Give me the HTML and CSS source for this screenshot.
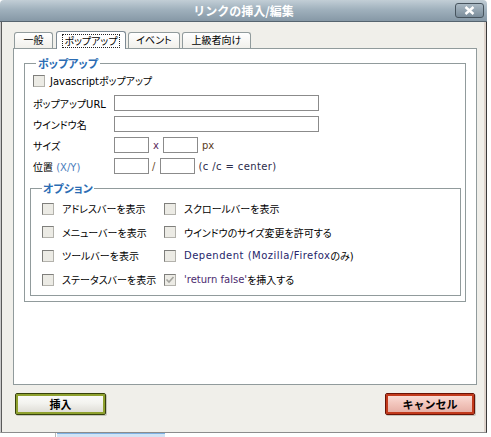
FILE: index.html
```html
<!DOCTYPE html>
<html lang="ja">
<head>
<meta charset="utf-8">
<title>リンクの挿入/編集</title>
<link rel="stylesheet" href="styles.css">
</head>
<body>
<div class="window">
  <div class="titlebar">
    <span class="spacer"></span>
    <span class="title">リンクの挿入/編集</span>
    <span class="close"><svg width="11" height="9" viewBox="0 0 11 9"><path d="M1.5 1 L9.5 8 M9.5 1 L1.5 8" stroke="#fff" stroke-width="2.4" fill="none"/></svg></span>
  </div>
  <div class="main">
    <div class="tabs">
      <div class="tab t1">一般</div>
      <div class="tab t2 active"><span class="focus">ポップアップ</span></div>
      <div class="tab t3">イベント</div>
      <div class="tab t4">上級者向け</div>
    </div>
    <div class="panel">
      <fieldset class="grp">
        <legend>ポップアップ</legend>
        <div class="jsrow"><span class="cb"></span><span>Javascriptポップアップ</span></div>
        <div class="form">
          <span class="lbl">ポップアップURL</span>
          <div class="field"><input class="inp url" type="text"></div>
          <span class="lbl">ウインドウ名</span>
          <div class="field"><input class="inp url" type="text"></div>
          <span class="lbl">サイズ</span>
          <div class="field"><input class="inp sm" type="text"><span class="times">x</span><input class="inp sm" type="text"><span class="unit">px</span></div>
          <span class="lbl">位置 <span class="xy">(X/Y)</span></span>
          <div class="field"><input class="inp sm" type="text"><span class="slash">/</span><input class="inp sm" type="text"><span class="hint">(c /c = center)</span></div>
        </div>
        <fieldset class="grp inner">
          <legend>オプション</legend>
          <div class="opts">
            <div class="opt"><span class="cb"></span>アドレスバーを表示</div>
            <div class="opt"><span class="cb"></span>スクロールバーを表示</div>
            <div class="opt"><span class="cb"></span>メニューバーを表示</div>
            <div class="opt"><span class="cb"></span>ウインドウのサイズ変更を許可する</div>
            <div class="opt"><span class="cb"></span>ツールバーを表示</div>
            <div class="opt"><span class="cb"></span><span class="lat">Dependent (Mozilla/Firefox</span>のみ)</div>
            <div class="opt"><span class="cb"></span>ステータスバーを表示</div>
            <div class="opt"><span class="cb checked"><svg width="10" height="10" viewBox="0 0 10 10"><path d="M1.5 4.5 L4 7 L8.5 2" stroke="#a3a39e" stroke-width="1.6" fill="none"/></svg></span><span class="lat2">'return false'</span>を挿入する</div>
          </div>
        </fieldset>
      </fieldset>
    </div>
    <div class="actions">
      <button class="btn insert" type="button">挿入</button>
      <button class="btn cancel" type="button">キャンセル</button>
    </div>
  </div>
</div>
<div class="below"><span class="blue"></span></div>
</body>
</html>
```

FILE: styles.css
```css
body {
  margin: 0;
  background: #ffffff;
  font-family: "DejaVu Sans", "Noto Sans CJK JP", sans-serif;
  font-size: 10px;
  color: #000;
  font-feature-settings: "palt" 1;
}

.window {
  width: 487px;
  height: 433px;
  display: flex;
  flex-direction: column;
}

.titlebar {
  height: 22px;
  box-sizing: border-box;
  border-bottom: 1px solid #56646f;
  border-radius: 4px 4px 0 0;
  background: linear-gradient(#c2ced6, #a0b1bd 45%, #8698a6);
  display: grid;
  grid-template-columns: 1fr auto 1fr;
  align-items: center;
}

.title {
  font-family: "Noto Sans CJK JP", sans-serif;
  font-weight: bold;
  font-size: 12px;
  color: #fff;
  line-height: 1;
  font-feature-settings: normal;
}

.close {
  justify-self: end;
  margin-right: 3px;
  width: 29px;
  height: 15px;
  box-sizing: border-box;
  border: 1px solid #47545e;
  border-radius: 3px;
  background: linear-gradient(#aab9c4, #7b8d9b);
  display: flex;
  align-items: center;
  justify-content: center;
}

.main {
  flex: 1;
  box-sizing: border-box;
  background: #f0efea;
  border-left: 1px solid #c9c9c9;
  border-right: 1px solid #3a3a3a;
  border-bottom: 1px solid #8c8c8c;
  box-shadow: inset 1px 0 0 #5a5a5a, inset -2px 0 0 #ddd3cc;
  padding: 9px 0 0 12px;
}

.tabs {
  display: flex;
  align-items: flex-end;
  height: 17px;
  margin-left: 1px;
  gap: 2px;
}

.tab {
  height: 16px;
  box-sizing: border-box;
  border: 1px solid #919b9c;
  border-bottom: none;
  border-radius: 3px 3px 0 0;
  background: linear-gradient(#ffffff, #f1f0eb);
  display: flex;
  align-items: center;
  justify-content: center;
  line-height: 1;
}

.t1 { width: 39px; margin-right: 1px; }
.t2 { width: 70px; }
.t3 { width: 52px; }
.t4 { width: 69px; }

.tab.active {
  height: 18px;
  margin-bottom: -1px;
  background: #ffffff;
  position: relative;
  z-index: 1;
  border-color: #7d8a94;
}

.focus {
  display: block;
  height: 14px;
  line-height: 13px;
  box-sizing: border-box;
  padding: 0 1px;
  border: 1px dotted #222;
}

.panel {
  width: 464px;
  height: 337px;
  box-sizing: border-box;
  border: 1px solid #919b9c;
  background: #ffffff;
  display: flow-root;
}

.grp {
  border: 1px solid #919b9c;
  margin: 8px 10px 0;
  padding: 0 4px 5px 5px;
  min-width: 0;
}

.grp > legend {
  color: #2b6cb3;
  font-weight: bold;
  font-family: "Noto Sans CJK JP", sans-serif;
  font-size: 11px;
  line-height: 12px;
  padding: 0 2px;
  margin-left: 6px;
}

.grp.inner {
  margin: 8px 0 0;
  padding: 8px 0 9px 11px;
}

.grp.inner > legend {
  margin-left: 0;
  padding: 0 1px;
}

.jsrow {
  display: flex;
  align-items: center;
  height: 13px;
  margin: 5px 0 0 3px;
}

.jsrow .cb { margin-right: 5px; }

.cb {
  width: 12px;
  height: 12px;
  box-sizing: border-box;
  border: 1px solid;
  border-color: #7f7f7c #b3b2ac #b3b2ac #7f7f7c;
  background: #ecebe5;
  flex: none;
  display: flex;
  align-items: center;
  justify-content: center;
}

.form {
  display: grid;
  grid-template-columns: 81px 1fr;
  grid-auto-rows: 16px;
  row-gap: 5px;
  align-items: center;
  margin: 8px 0 0 3px;
}

.lbl { white-space: nowrap; }
.xy { color: #4a7cbc; }

.field {
  display: flex;
  align-items: center;
}

.inp {
  box-sizing: border-box;
  height: 16px;
  margin: 0;
  padding: 0;
  border: 1px solid #8b8b8b;
  background: #fff;
  font: inherit;
}

.inp.url { width: 205px; }
.inp.sm { width: 35px; }

.times { margin: 0 4px; color: #5a2a5a; }
.unit { margin-left: 4px; color: #5a3a1a; }
.slash { margin: 0 5px 0 3px; color: #6a4a2a; }
.hint { margin-left: 3px; color: #2a2a4a; letter-spacing: 0.4px; }

.opts {
  display: grid;
  grid-template-columns: 122px auto;
  grid-auto-rows: 13px;
  row-gap: 10.7px;
  align-items: center;
}

.opt {
  display: flex;
  align-items: center;
  white-space: nowrap;
}

.opt .cb { margin-right: 8px; }

.lat { color: #26266a; letter-spacing: 0.5px; }
.lat2 { color: #4a2a6e; }

.actions {
  display: flex;
  justify-content: space-between;
  width: 464px;
  box-sizing: border-box;
  padding: 0 2px;
  margin-top: 8px;
}

.btn {
  height: 22px;
  box-sizing: border-box;
  padding: 0;
  border-radius: 2px;
  font-family: "Noto Sans CJK JP", sans-serif;
  font-weight: bold;
  font-size: 11px;
  line-height: 1;
  color: #000;
  font-feature-settings: normal;
}

.btn.insert {
  width: 91px;
  border: 1px solid #37420c;
  box-shadow: inset 0 0 0 2px #8fa12f, 1px 1px 0 #c4c4bc;
  background: linear-gradient(#fdfdfb, #f3f3ef 45%, #dbd9d2);
}

.btn.cancel {
  width: 90px;
  border: 1px solid #6a1206;
  box-shadow: inset 0 0 0 2px #c23a1c, 1px 1px 0 #c4c4bc;
  background: linear-gradient(#fbe2dc, #f3c7be 45%, #e4aba1);
}

.below {
  height: 4px;
  margin-left: 55px;
  border-left: 1px solid #b8b8b8;
  display: flex;
}

.blue {
  margin-left: 1px;
  width: 108px;
  height: 3px;
  border-top: 1px solid #7fb2e4;
  background: #d3e4f5;
}
```
